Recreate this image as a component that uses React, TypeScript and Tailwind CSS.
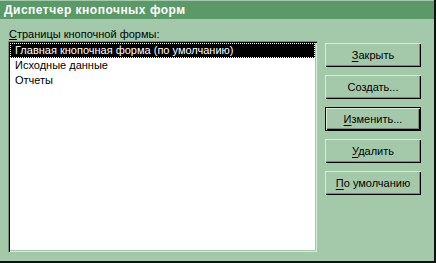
const pages = ["Главная кнопочная форма (по умолчанию)", "Исходные данные", "Отчеты"];

function Btn({ pre, acc, post, focused }: { pre?: string; acc: string; post?: string; focused?: boolean }) {
  return (
    <button
      type="button"
      className={`h-[24px] w-[96px] bg-[#a4c9aa] text-[11px] leading-none text-black ${
        focused
          ? "border border-black shadow-[inset_1px_1px_#d6ecd8,inset_-1px_-1px_#000,inset_-2px_-2px_#6f9274]"
          : "shadow-[inset_1px_1px_#d6ecd8,inset_-1px_-1px_#000,inset_-2px_-2px_#6f9274]"
      }`}
    >
      {pre}
      <span className="underline underline-offset-2">{acc}</span>
      {post}
    </button>
  );
}

export default function App() {
  return (
    <div className="w-[436px] h-[263px] bg-[#a4c9aa] font-['Liberation_Sans',Arial,sans-serif] border-r-2 border-r-[#111] border-b-2 border-b-[#111] flex flex-col overflow-hidden">
      <div className="h-[19px] bg-[#5b9a68] border-t border-t-[#a4c9aa] flex items-center pl-[4px]">
        <span className="text-white font-bold text-[12px] tracking-[0.5px]">Диспетчер кнопочных форм</span>
      </div>
      <div className="flex flex-1 pl-[8px] pt-[9px]">
        <div className="flex flex-col">
          <div className="h-[13px] pl-[1px] text-[11px] leading-[12px] text-black">
            <span className="underline underline-offset-1">С</span>траницы кнопочной формы:
          </div>
          <div className="w-[309px] h-[211px] bg-white shadow-[inset_1px_1px_#6f9274,inset_2px_2px_#000,inset_-1px_-1px_#d6ecd8,inset_-2px_-2px_#a4c9aa] p-[2px]">
            {pages.map((p, i) => (
              <div
                key={p}
                className={`h-[15px] pl-[4px] text-[11px] leading-[13px] whitespace-nowrap ${
                  i === 0 ? "bg-black text-white border border-dotted border-white" : "text-black border border-transparent"
                }`}
              >
                {p}
              </div>
            ))}
          </div>
        </div>
        <div className="flex flex-col gap-[8px] pl-[8px] pt-[15px]">
          <Btn acc="З" post="акрыть" />
          <Btn pre="Соз" acc="д" post="ать..." />
          <Btn acc="И" post="зменить..." focused />
          <Btn acc="У" post="далить" />
          <Btn acc="П" post="о умолчанию" />
        </div>
      </div>
    </div>
  );
}
